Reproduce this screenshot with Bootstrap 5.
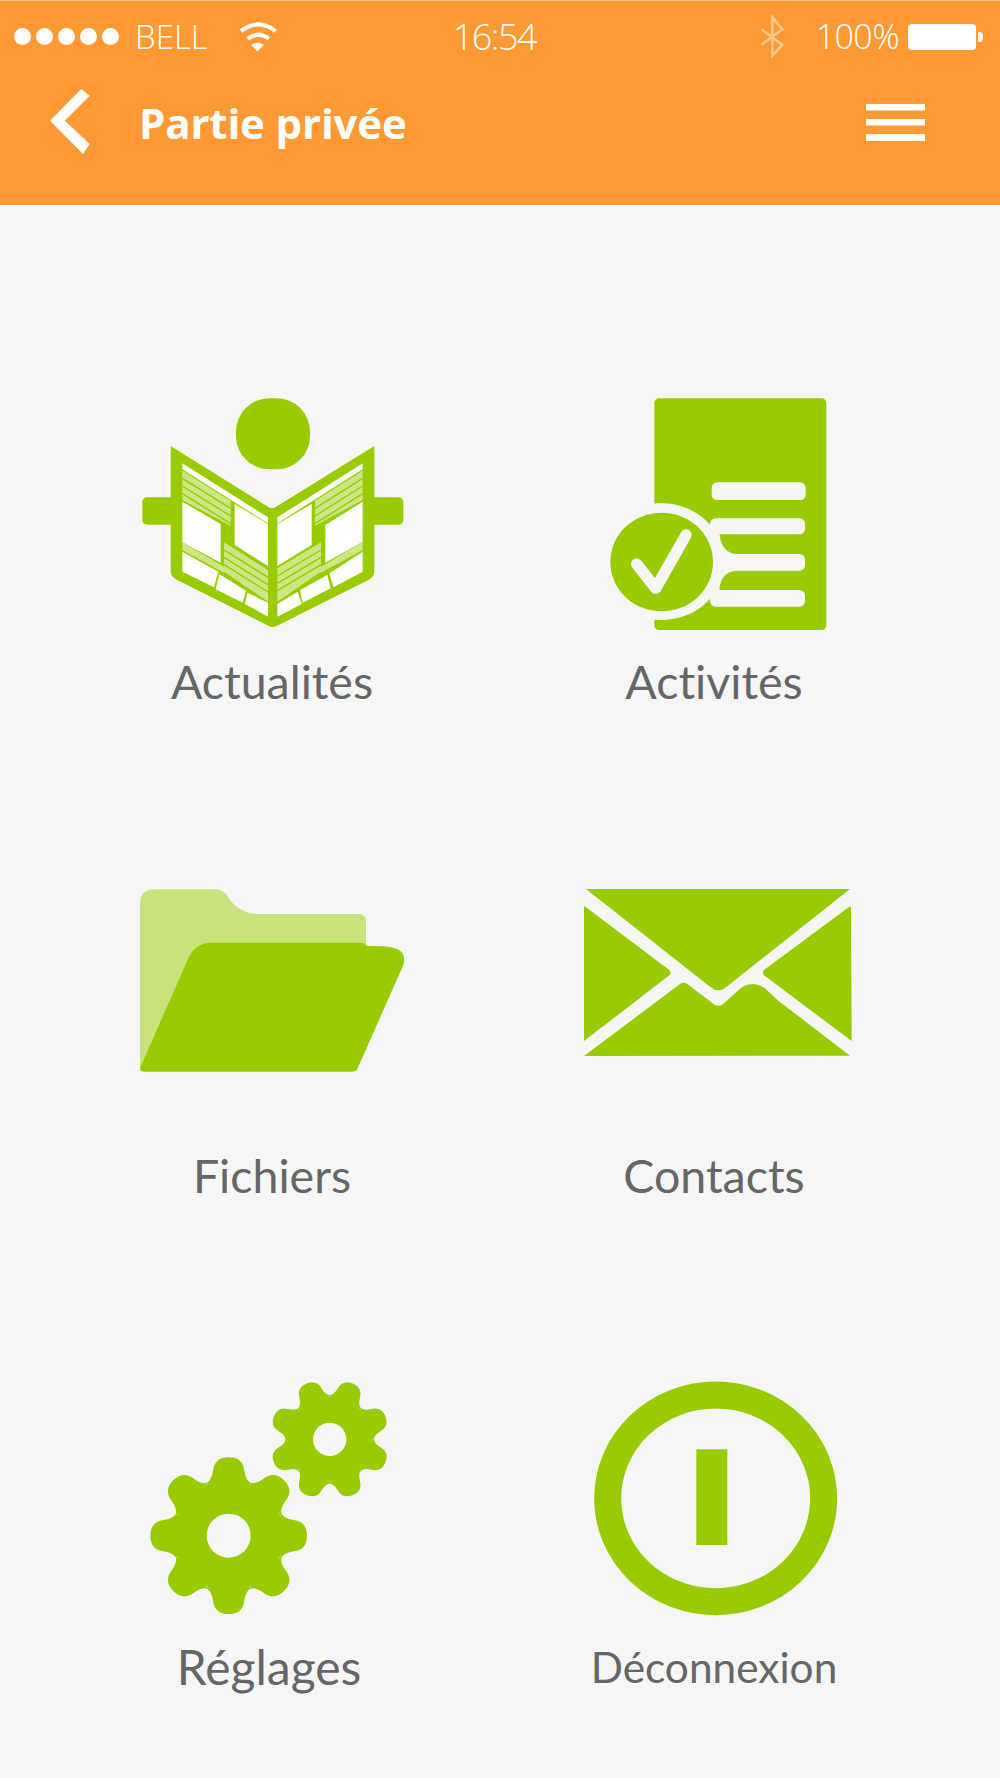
<!DOCTYPE html>
<html lang="fr">
<head>
    <meta charset="UTF-8">
    <meta name="viewport" content="width=device-width, initial-scale=1.0">
    <title>Partie privée</title>
    <link href="https://cdn.jsdelivr.net/npm/bootstrap@5.3.3/dist/css/bootstrap.min.css" rel="stylesheet">
    <script src="https://cdn.jsdelivr.net/npm/bootstrap@5.3.3/dist/js/bootstrap.bundle.min.js"></script>
    <style>
        body { background: #f6f6f6; font-family: "Open Sans", "Liberation Sans", sans-serif; }
        .entete { background: #ff9933; height: 205px; border-top: 1px solid #fbc68c; color: #fff; }
        .statut { height: 71px; padding: 0 17px 0 14px; font-weight: 300; }
        .points { gap: 5px; }
        .points span { width: 17px; height: 17px; border-radius: 50%; background: #fff; }
        .operateur { margin-left: 16px; font-size: 33px; }
        .wifi { margin-left: 29px; }
        .heure { margin-left: 174px; font-size: 36px; letter-spacing: -1.5px; }
        .bt { margin-right: 32px; }
        .pourcent { font-size: 34px; letter-spacing: -.6px; }
        .batterie { margin-left: 9px; }
        .barre { height: 100px; padding: 0 75px 0 48px; }
        .titre { font-size: 42px; font-weight: 700; margin-left: 49px; letter-spacing: -.15px; }
        .grille { padding-top: 175px; margin: 0 56px 0 48px; }
        .tuile { height: 490px; }
        .tuile svg { display: block; margin: 0 auto; }
        .libelle { font-family: Lato, "Liberation Sans", sans-serif; font-variant-ligatures: none; color: #666; font-size: 46.5px; line-height: 60px; text-align: center; }
        .ligne-a .libelle { margin-top: 11px; }
        .ligne-b .libelle { margin-top: 15px; }
        .ligne-c .libelle { margin-top: 17px; }
        .droite .libelle { padding-right: 12px; }
        .ligne-c .reglages { padding-right: 6px; font-size: 48px; }
        .petit { font-size: 42.4px; }
    </style>
</head>
<body>
    <header class="entete">
        <div class="statut d-flex align-items-center">
            <div class="points d-flex"><span></span><span></span><span></span><span></span><span></span></div>
            <span class="operateur">BELL</span>
            <svg class="wifi" width="42" height="32" viewBox="710 60 125 95">
                <path d="M722 90Q772 50 825 90M742 113Q772 88 805 113" fill="none" stroke="#fff" stroke-width="12"/>
                <path d="M752 131Q771 118 790 131L771 150Z" fill="#fff"/>
            </svg>
            <span class="heure">16:54</span>
            <svg class="bt ms-auto" width="25" height="43" viewBox="115 45 75 130">
                <path d="M122 88L185 135L155 168V52L185 88L122 135" fill="none" stroke="#fff" stroke-opacity=".45" stroke-width="8"/>
            </svg>
            <span class="pourcent">100%</span>
            <svg class="batterie" width="75" height="26" viewBox="0 0 75 26">
                <rect width="68" height="26" rx="4" fill="#fff"/>
                <path d="M70 8h2q3 0 3 5t-3 5h-2z" fill="#fff"/>
            </svg>
        </div>
        <nav class="barre d-flex align-items-center">
            <svg width="42" height="66" viewBox="0 0 42 66">
                <polygon points="33.300,0 41.700,6.700 16.700,31.700 41.700,55 35,65 2,31.700" fill="#fff"/>
            </svg>
            <span class="titre">Partie privée</span>
            <svg class="ms-auto" width="59" height="37" viewBox="0 0 59 37">
                <path d="M0 0h59v6.500H0zM0 15h59v6.500H0zM0 30h59v7H0z" fill="#fff"/>
            </svg>
        </nav>
    </header>

    <main class="grille">
        <div class="row g-0 ligne-a">
            <div class="col-6 tuile">
                <svg width="300" height="260" viewBox="6 0 900 780">
                    <rect x="348" y="55" width="222" height="213" rx="100" fill="#9c0"/>
                    <rect x="67" y="352" width="100" height="82" rx="14" fill="#9c0"/>
                    <rect x="750" y="352" width="100" height="82" rx="14" fill="#9c0"/>
                    <path d="M152 198L440 378Q456 392 472 378L763 198V575Q763 590 745 600L470 738Q458 744 446 738L172 600Q152 590 152 575Z" fill="#9c0"/>
                    <g fill="#fff">
                        <polygon points="187,250 444,412 444,430 187,268"/>
                        <polygon points="187,365 302,432 302,548 187,487"/>
                        <polygon points="344,372 444,432 444,558 344,495"/>
                        <polygon points="187,515 295,575 282,622 187,575"/>
                        <polygon points="298,582 378,632 368,668 287,628"/>
                        <polygon points="382,638 444,668 444,710 375,672"/>
                        <polygon points="472,412 728,250 728,268 472,430"/>
                        <polygon points="472,432 575,372 575,495 472,558"/>
                        <polygon points="616,435 728,365 728,485 616,548"/>
                        <polygon points="472,672 533,635 545,672 472,710"/>
                        <polygon points="540,630 622,585 632,625 548,668"/>
                        <polygon points="628,580 728,515 728,575 640,622"/>
                    </g>
                    <g fill="#cbe783">
                        <polygon points="187,272 332,362 332,437 187,360"/>
                        <polygon points="312,487 444,570 444,665 312,575"/>
                        <polygon points="187,487 312,560 312,578 187,510"/>
                        <polygon points="585,362 728,272 728,360 585,437"/>
                        <polygon points="472,565 603,487 603,575 472,665"/>
                        <polygon points="603,560 728,485 728,510 603,578"/>
                    </g>
                    <g fill="none" stroke="#9c0" stroke-width="4">
                        <path d="M187 295L332 385M187 318L332 408M187 341L332 431"/>
                        <path d="M312 510L444 592M312 532L444 614M312 554L444 636"/>
                        <path d="M585 385L728 295M585 408L728 318M585 431L728 341"/>
                        <path d="M472 588L603 510M472 610L603 532M472 632L603 554"/>
                    </g>
                </svg>
                <div class="libelle">Actualités</div>
            </div>
            <div class="col-6 tuile droite">
                <svg width="260" height="260" viewBox="0 0 780 780">
                    <rect x="193" y="55" width="516" height="695" rx="14" fill="#9c0"/>
                    <ellipse cx="215" cy="545" rx="188" ry="175" fill="#f6f6f6"/>
                    <rect x="100" y="370" width="93" height="352" fill="#f6f6f6"/>
                    <g fill="#f6f6f6">
                        <rect x="365" y="307" width="282" height="53" rx="16"/>
                        <rect x="360" y="415" width="285" height="48" rx="16"/>
                        <rect x="360" y="522" width="285" height="50" rx="16"/>
                        <rect x="360" y="630" width="285" height="50" rx="16"/>
                        <path d="M360 455H388Q392 518 440 522V572Q392 575 388 630H360Z"/>
                    </g>
                    <ellipse cx="215" cy="546" rx="154" ry="148" fill="#9c0"/>
                    <polyline points="140,552 197,625 288,465" fill="none" stroke="#f6f6f6" stroke-width="34" stroke-linecap="round" stroke-linejoin="round"/>
                </svg>
                <div class="libelle">Activités</div>
            </div>
        </div>
        <div class="row g-0 ligne-b">
            <div class="col-6 tuile">
                <svg width="300" height="260" viewBox="6 0 900 780">
                    <path d="M60 100Q60 58 105 58H285Q310 58 325 82Q355 132 420 132H715Q738 132 738 155V235L100 560L60 600Z" fill="#c8e27c"/>
                    <path d="M62 590L205 265Q225 218 275 218H715Q735 218 740 228L790 229Q865 232 850 285L712 597Q708 605 695 605H75Q55 605 62 590Z" fill="#9c0"/>
                </svg>
                <div class="libelle">Fichiers</div>
            </div>
            <div class="col-6 tuile droite">
                <svg width="300" height="260" viewBox="0 0 900 780">
                    <g fill="#9c0">
                        <path d="M48 57H840L470 350Q445 372 420 350Z"/>
                        <path d="M42 107L298 300Q305 308 298 316L42 513Z"/>
                        <path d="M843 110L845 513L582 316Q576 308 582 300L838 110Z"/>
                        <path d="M42 558L330 342Q340 335 352 342L428 400Q445 415 462 400L500 365Q540 325 585 355L625 392L840 557Z"/>
                    </g>
                </svg>
                <div class="libelle">Contacts</div>
            </div>
        </div>
        <div class="row g-0 ligne-c">
            <div class="col-6 tuile">
                <svg width="270" height="260" viewBox="-9 0 810 780">
                    <defs>
                        <path id="dent" d="M-72 -155Q-52 -162 -47 -195Q-42 -235 0 -235Q42 -235 47 -195Q52 -162 72 -155Z" fill="#9c0"/>
                    </defs>
                    <g transform="translate(266 527)">
                        <circle r="166" fill="#9c0"/>
                        <use href="#dent"/><use href="#dent" transform="rotate(45)"/><use href="#dent" transform="rotate(90)"/><use href="#dent" transform="rotate(135)"/>
                        <use href="#dent" transform="rotate(180)"/><use href="#dent" transform="rotate(225)"/><use href="#dent" transform="rotate(270)"/><use href="#dent" transform="rotate(315)"/>
                        <circle r="66" fill="#f6f6f6"/>
                    </g>
                    <g transform="translate(569 238)">
                        <circle r="128" fill="#9c0"/>
                        <g transform="scale(.77)">
                            <use href="#dent" transform="rotate(22.500)"/><use href="#dent" transform="rotate(67.500)"/><use href="#dent" transform="rotate(112.500)"/><use href="#dent" transform="rotate(157.500)"/>
                            <use href="#dent" transform="rotate(202.500)"/><use href="#dent" transform="rotate(247.500)"/><use href="#dent" transform="rotate(292.500)"/><use href="#dent" transform="rotate(337.500)"/>
                        </g>
                        <circle r="50" fill="#f6f6f6"/>
                    </g>
                </svg>
                <div class="libelle reglages">Réglages</div>
            </div>
            <div class="col-6 tuile droite">
                <svg width="300" height="260" viewBox="0 0 900 780">
                    <ellipse cx="437" cy="415" rx="324" ry="310" fill="none" stroke="#9c0" stroke-width="81"/>
                    <rect x="379" y="268" width="93" height="287" fill="#9c0"/>
                </svg>
                <div class="libelle petit">Déconnexion</div>
            </div>
        </div>
    </main>
</body>
</html>
